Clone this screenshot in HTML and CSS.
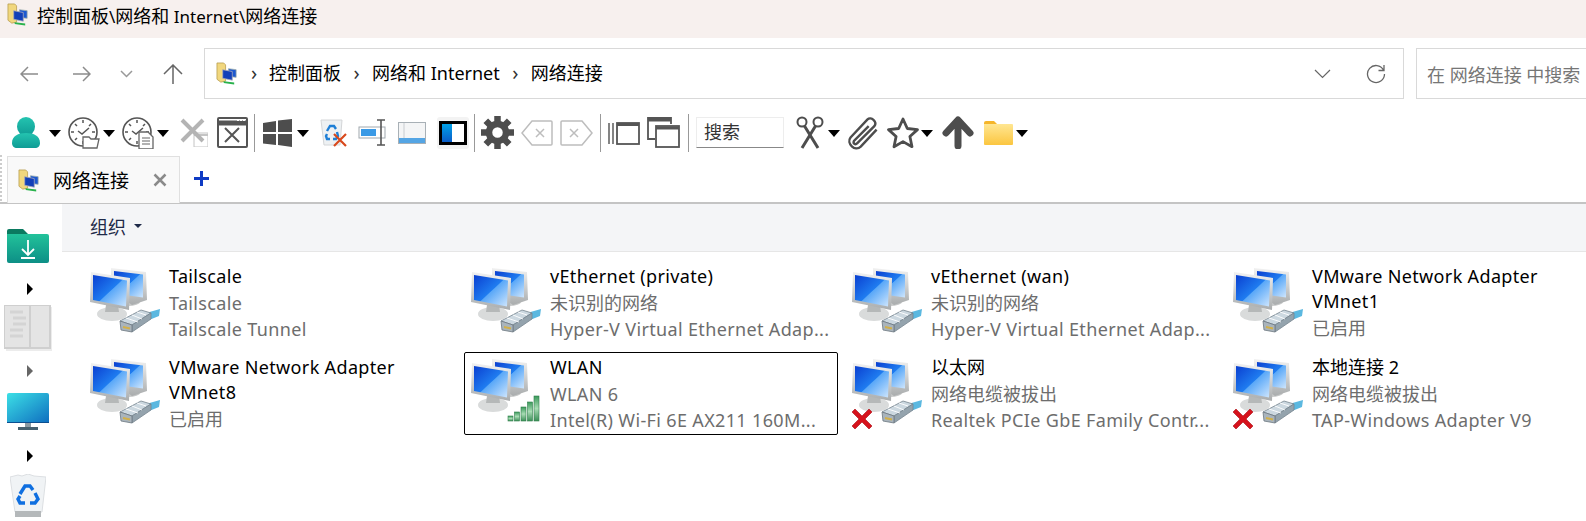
FILE: index.html
```html
<!DOCTYPE html>
<html lang="zh-CN">
<head>
  <meta charset="UTF-8" />
  <title>网络连接</title>
  <link rel="stylesheet" href="styles.css">
</head>
<body>
  <!-- shared icon parts -->
  <svg class="sprites" aria-hidden="true">
    <defs>
      <linearGradient id="gScreen" x1="0" y1="0" x2="1" y2="1">
        <stop offset="0" stop-color="#0a3fd0"/><stop offset=".5" stop-color="#1f7cf0"/><stop offset=".52" stop-color="#5aa8f8"/><stop offset="1" stop-color="#cfe6fd"/>
      </linearGradient>
      <linearGradient id="gFrame" x1="0" y1="0" x2="0" y2="1">
        <stop offset="0" stop-color="#f2f2f2"/><stop offset="1" stop-color="#a9acad"/>
      </linearGradient>
      <linearGradient id="gTeal" x1="0" y1="0" x2="0" y2="1">
        <stop offset="0" stop-color="#24c4b0"/><stop offset="1" stop-color="#0f9c95"/>
      </linearGradient>
      <linearGradient id="gBar" x1="0" y1="0" x2="0" y2="1">
        <stop offset="0" stop-color="#3c9a5c"/><stop offset=".5" stop-color="#a8dcb4"/><stop offset="1" stop-color="#3c8f58"/>
      </linearGradient>
      <linearGradient id="gFolder" x1="0" y1="0" x2="0" y2="1">
        <stop offset="0" stop-color="#ffe692"/><stop offset="1" stop-color="#fbc640"/>
      </linearGradient>
      <linearGradient id="gDown" x1="0" y1="0" x2="0" y2="1">
        <stop offset="0" stop-color="#22c29a"/><stop offset="1" stop-color="#0d8f86"/>
      </linearGradient>
      <linearGradient id="gMon" x1="0" y1="0" x2="1" y2="1">
        <stop offset="0" stop-color="#3ce0e6"/><stop offset="1" stop-color="#0f6fc0"/>
      </linearGradient>
      <linearGradient id="gPanel" x1="0" y1="0" x2="0" y2="1">
        <stop offset="0" stop-color="#00a2e8"/><stop offset="1" stop-color="#0a5cc8"/>
      </linearGradient>

      <g id="netPcs">
        <ellipse cx="38" cy="35" rx="12" ry="4" fill="#c6c8c8"/>
        <path d="M21 1l35 4 1 28-15 5-4-3-17-4z" fill="url(#gFrame)"/>
        <path d="M24 4l29 3.500v23l-29-4z" fill="url(#gScreen)"/>
        <ellipse cx="22" cy="47" rx="15" ry="7" fill="#d9dbdb"/>
        <path d="M16 38h12l1 7H15z" fill="#b5b8b8"/>
        <path d="M1 5l39 6-1 32-39-8z" fill="url(#gFrame)"/>
        <path d="M3 8l34 5.500-1 26-33-6.500z" fill="url(#gScreen)"/>
      </g>
      <g id="netCable">
        <path d="M56 46l14-4-1 7-10 4z" fill="#5bb8e0"/>
        <path d="M30 54l21-11 10 3-19 12z" fill="#ccd8e0" stroke="#77858f" stroke-width=".8"/>
        <path d="M42 58l19-12v6L42 65z" fill="#94a3ad" stroke="#77858f" stroke-width=".8"/>
        <path d="M30 54l12 4v7l-11-2z" fill="#a9b4bc" stroke="#6c7780" stroke-width=".8"/>
        <path d="M33 60l7 1.500" stroke="#d2b04a" stroke-width="2"/>
        <path d="M36 51l12 4M42 48l10 4M47 45l9 3" stroke="#fff" stroke-width=".9"/>
      </g>
      <g id="netBars">
        <rect x="37" y="58" width="5" height="5" fill="url(#gBar)" stroke="#2f7f4b" stroke-width=".6"/>
        <rect x="43.500" y="54" width="5" height="9" fill="url(#gBar)" stroke="#2f7f4b" stroke-width=".6"/>
        <rect x="50" y="49" width="5" height="14" fill="url(#gBar)" stroke="#2f7f4b" stroke-width=".6"/>
        <rect x="56.500" y="44" width="5" height="19" fill="url(#gBar)" stroke="#2f7f4b" stroke-width=".6"/>
        <rect x="63" y="38" width="5" height="25" fill="url(#gBar)" stroke="#2f7f4b" stroke-width=".6"/>
      </g>
      <g id="netOff">
        <path d="M3 51l7 7 7-7 3 3-7 7 7 7-3 3-7-7-7 7-3-3 7-7-7-7z" fill="#d6121c" stroke="#a80d14" stroke-width=".6"/>
      </g>
      <g id="cpIcon">
        <path d="M1 1h7l2 2v17l-5 1-4-3z" fill="#f1d77e" stroke="#b79c4d" stroke-width=".8"/>
        <path d="M13 7l8 1v8l-8-1z" fill="#1c58d0" stroke="#9aa" stroke-width=".8"/>
        <path d="M7 8l10 2v9L7 17z" fill="#123fb8" stroke="#aab" stroke-width=".8"/>
        <path d="M8 20l11 1.500v2L8 22z" fill="#29b24c"/>
      </g>
    </defs>
  </svg>

  <div class="titlebar">
    <svg class="cp-ico" viewBox="0 0 24 24"><use href="#cpIcon"/></svg>
    <span>控制面板<span class="tt-lat">\</span>网络和<span class="tt-lat"> Internet\</span>网络连接</span>
  </div>

  <div class="navbar">
    <div class="nav-btns">
      <svg class="nav-arrow back" viewBox="0 0 18 16"><path d="M8 1L1 8l7 7M1 8h17" /></svg>
      <svg class="nav-arrow fwd" viewBox="0 0 18 16"><path d="M10 1l7 7-7 7M17 8H0" /></svg>
      <svg class="nav-chev" viewBox="0 0 13 8"><path d="M1 1l5.500 5.500L12 1" /></svg>
      <svg class="nav-up" viewBox="0 0 20 20"><path d="M1 10l9-9 9 9M10 1v19" /></svg>
    </div>
    <div class="address">
      <svg class="cp-ico" viewBox="0 0 24 24"><use href="#cpIcon"/></svg>
      <span class="crumb-sep first">›</span>
      <span>控制面板</span>
      <span class="crumb-sep">›</span>
      <span>网络和 Internet</span>
      <span class="crumb-sep">›</span>
      <span>网络连接</span>
      <svg class="addr-chev" viewBox="0 0 17 10"><path d="M1 1l7.500 7.500L16 1" /></svg>
      <svg class="addr-refresh" viewBox="0 0 20 20"><path d="M17.500 6A8.500 8.500 0 1 0 18.500 10M18 1v5.500h-5.500" /></svg>
    </div>
    <div class="search">在 网络连接 中搜索</div>
  </div>

  <div class="toolbar">
    <svg class="ico" width="28" height="31" viewBox="0 0 28 31"><ellipse cx="14" cy="9.500" rx="9" ry="9.500" fill="url(#gTeal)"/><path d="M0 26c0-7 6-10 14-10s14 3 14 10c0 3-2 5-5 5H5c-3 0-5-2-5-5z" fill="url(#gTeal)"/></svg>
    <i class="caret ml9"></i>
    <svg class="ico ml7" width="32" height="32" viewBox="0 0 32 32"><circle cx="15" cy="15" r="14" fill="none" stroke="#555" stroke-width="1.600"/><path d="M15 3v3M15 24v3M3 15h3M24 15h3M7 7l2 2M23 7l-2 2M7 23l2-2M10 14l4 3 7-6" fill="none" stroke="#555" stroke-width="1.500"/><path d="M15 20h6l2 2h8l-2 9H15z" fill="#fff" stroke="#666" stroke-width="1.300"/></svg>
    <i class="caret ml3"></i>
    <svg class="ico ml7" width="32" height="32" viewBox="0 0 32 32"><circle cx="15" cy="15" r="14" fill="none" stroke="#555" stroke-width="1.600"/><path d="M15 3v3M15 24v3M3 15h3M24 15h3M7 7l2 2M23 7l-2 2M7 23l2-2M10 14l4 3 7-6" fill="none" stroke="#555" stroke-width="1.500"/><path d="M17 15h9l5 5v12H17z" fill="#fff" stroke="#666" stroke-width="1.300"/><path d="M20 21h8M20 24h8M20 27h8" stroke="#666" stroke-width="1.200"/></svg>
    <i class="caret ml3"></i>
    <svg class="ico ml11" width="28" height="29" viewBox="0 0 28 29"><path d="M14 15h14v14H14z" fill="#fff" stroke="#c4c4c4"/><path d="M14 17h14" stroke="#c4c4c4" stroke-width="2"/><path d="M2 2l21 21M23 2L2 23" stroke="#b4b4b4" stroke-width="4"/></svg>
    <svg class="ico ml9" width="31" height="31" viewBox="0 0 31 31"><rect x="1" y="1" width="29" height="29" rx="1" fill="#fff" stroke="#555" stroke-width="2"/><path d="M1 6h29" stroke="#555" stroke-width="5"/><path d="M20 3.500h2M23 3.500h2M26 3.500h2" stroke="#fff"/><path d="M8 11l14 14M22 11L8 25" stroke="#555" stroke-width="2"/></svg>
    <i class="sep ml6"></i>
    <svg class="ico ml8" width="29" height="28" viewBox="0 0 29 28"><path d="M0 4l13-2v11H0zM15 1.500L29 0v13H15zM0 15h13v11L0 24.500zM15 15h14v13l-14-2z" fill="#4d4d4d"/></svg>
    <i class="caret ml5"></i>
    <svg class="ico ml11" width="28" height="29" viewBox="0 0 28 29"><path d="M1 2h21l-2 25H4z" fill="#eef1f3" stroke="#d4d6d8"/><path d="M7 13l3-5h4l2 3M17 14l1 4-2 3h-3M10 21H7l-1-3 1-2" fill="none" stroke="#1f7fd6" stroke-width="2.400"/><path d="M14 16l12 12M26 16L14 28" stroke="#d8491d" stroke-width="2.200"/></svg>
    <svg class="ico ml10" width="28" height="27" viewBox="0 0 28 27"><rect x="1" y="8" width="26" height="11" fill="#fff" stroke="#9fa7ad"/><rect x="3" y="10" width="15" height="7" fill="#3a9ae6"/><path d="M19 1h8M19 26h8M23 1v25" stroke="#555" stroke-width="1.600"/></svg>
    <svg class="ico ml12" width="28" height="22" viewBox="0 0 28 22"><rect x=".5" y=".5" width="27" height="21" fill="#f4f5f6" stroke="#a8b0b6"/><rect x="1" y="16" width="26" height="5" fill="#54a5e4"/><path d="M6 1v15" stroke="#c8ccd0"/></svg>
    <span class="panel-btn ml11">
      <svg width="28" height="24" viewBox="0 0 28 24"><rect x="1.500" y="1.500" width="25" height="21" fill="#fff" stroke="#000" stroke-width="3"/><rect x="3" y="3" width="10" height="18" fill="url(#gPanel)"/></svg>
    </span>
    <i class="sep ml5"></i>
    <svg class="ico ml6" width="33" height="33" viewBox="0 0 33 33"><path d="M16.500 0v6M16.500 27v6M0 16.500h6M27 16.500h6M4.800 4.800l4.500 4.500M23.700 23.700l4.500 4.500M28.200 4.800l-4.500 4.500M9.300 23.700l-4.500 4.500" stroke="#4d4d4d" stroke-width="6.500"/><circle cx="16.500" cy="16.500" r="8.500" fill="#fff" stroke="#4d4d4d" stroke-width="6.500"/></svg>
    <svg class="ico ml7" width="32" height="26" viewBox="0 0 32 26"><path d="M11 1h19a1 1 0 0 1 1 1v22a1 1 0 0 1-1 1H11L1 13z" fill="#fff" stroke="#bdbdbd" stroke-width="1.500"/><path d="M15 9l8 8M23 9l-8 8" stroke="#bdbdbd" stroke-width="1.500"/></svg>
    <svg class="ico ml7" width="33" height="26" viewBox="0 0 33 26"><path d="M22 1H2a1 1 0 0 0-1 1v22a1 1 0 0 0 1 1h20l10-12z" fill="#fff" stroke="#bdbdbd" stroke-width="1.500"/><path d="M10 9l8 8M18 9l-8 8" stroke="#bdbdbd" stroke-width="1.500"/></svg>
    <i class="sep ml7"></i>
    <svg class="ico ml7" width="32" height="24" viewBox="0 0 32 24"><path d="M1 2v21M5 2v21" stroke="#666" stroke-width="1.600"/><rect x="9" y="2" width="22" height="21" fill="#fff" stroke="#555" stroke-width="1.800"/><path d="M9 3.500h22" stroke="#555" stroke-width="3"/></svg>
    <svg class="ico ml7" width="33" height="31" viewBox="0 0 33 31"><path d="M8 22H1V1h23v6" fill="none" stroke="#555" stroke-width="1.800"/><path d="M1 3h23" stroke="#555" stroke-width="3"/><rect x="9" y="9" width="23" height="21" fill="#fff" stroke="#555" stroke-width="1.800"/><path d="M9 11h23" stroke="#555" stroke-width="3"/></svg>
    <i class="sep ml8"></i>
    <div class="tb-search ml7">搜索</div>
    <svg class="ico ml12" width="28" height="33" viewBox="0 0 28 33"><circle cx="6" cy="6" r="4.500" fill="none" stroke="#4d4d4d" stroke-width="2"/><circle cx="22" cy="6" r="4.500" fill="none" stroke="#4d4d4d" stroke-width="2"/><path d="M8.500 10L22 32M19.500 10L6 32" stroke="#4d4d4d" stroke-width="3"/></svg>
    <i class="caret ml4"></i>
    <svg class="ico ml7" width="32" height="34" viewBox="5 1 26 30"><path d="M30 13L16 28c-5 5-13-3-9-8L22 4c3-3 9 2 6 6L13 25c-2 2-4 0-3-2L23 10" fill="none" stroke="#4d4d4d" stroke-width="2.100"/></svg>
    <svg class="ico ml8" width="32" height="32" viewBox="0 0 32 32"><path d="M16 2l4.300 9.500 10.200 1.100-7.600 6.900 2.100 10.200L16 24.600 7 29.700l2.100-10.200-7.600-6.900 10.200-1.100z" fill="#fff" stroke="#4d4d4d" stroke-width="2.800" stroke-linejoin="round"/></svg>
    <i class="caret ml2"></i>
    <svg class="ico ml9" width="32" height="33" viewBox="0 0 32 33"><path d="M4 17L16 4l12 13M16 5v25" fill="none" stroke="#4d4d4d" stroke-width="7" stroke-linecap="round" stroke-linejoin="round"/></svg>
    <svg class="ico ml10" width="29" height="24" viewBox="0 0 29 24"><path d="M0 2a2 2 0 0 1 2-2h8l3 3H0z" fill="#f5b52a"/><path d="M0 3h28a1 1 0 0 1 1 1v19a1 1 0 0 1-1 1H1a1 1 0 0 1-1-1z" fill="url(#gFolder)"/></svg>
    <i class="caret ml3"></i>
  </div>

  <div class="tabstrip">
    <div class="grip"></div>
    <div class="tab">
      <svg class="cp-ico" viewBox="0 0 24 24"><use href="#cpIcon"/></svg>
      <span class="tab-label">网络连接</span>
      <svg class="tab-close" viewBox="0 0 14 14"><path d="M1.500 1.500l11 11M12.500 1.500l-11 11" /></svg>
    </div>
    <svg class="tab-plus" viewBox="0 0 15 15"><path d="M7.500 0v15M0 7.500h15" /></svg>
  </div>

  <div class="main">
    <div class="side">
      <svg class="side-folder" width="42" height="34" viewBox="0 0 42 34"><path d="M0 2a2 2 0 0 1 2-2h14l5 5H0z" fill="#0b7a60"/><path d="M0 5h40a2 2 0 0 1 2 2v25a2 2 0 0 1-2 2H2a2 2 0 0 1-2-2z" fill="url(#gDown)"/><path d="M21 11v14M15 20l6 6 6-6M14 29h14" fill="none" stroke="#fff" stroke-width="1.800"/></svg>
      <i class="tri"></i>
      <svg class="side-book" width="48" height="46" viewBox="0 0 48 46"><rect x="2" y="2" width="46" height="44" fill="#ececec"/><rect x="0" y="0" width="46" height="43" fill="#e4e4e4" stroke="#cfcfcf" stroke-width="2"/><path d="M26 0v43" stroke="#cfcfcf" stroke-width="2"/><path d="M6 7h13M9 13h13M9 19h13M6 25h13M6 31h13" stroke="#d4d4d4" stroke-width="3"/></svg>
      <i class="tri dim"></i>
      <svg class="side-mon" width="42" height="37" viewBox="0 0 42 37"><path d="M0 2a2 2 0 0 1 2-2h38a2 2 0 0 1 2 2v27H0z" fill="url(#gMon)"/><path d="M0 29h42v1H0z" fill="#0c4f90"/><path d="M18 30h6v4h-6z" fill="#8a9aa3"/><path d="M11 34h20v3H11z" fill="#46606e"/></svg>
      <i class="tri"></i>
      <svg class="side-bin" width="36" height="43" viewBox="0 0 36 43"><path d="M0 3l8-2 4 1 6-2 6 2 12 1-4 35H5z" fill="#f0f3f5" stroke="#dcdfe2"/><path d="M5 37h26v6H5z" fill="#b4b8ba"/><path d="M10 20l5-8h5l3 4M25 19l3 6-3 4h-5M15 29h-5l-2-4 2-3" fill="none" stroke="#0f6fe0" stroke-width="3.400"/></svg>
    </div>

    <div class="content">
      <div class="cmdbar">
        <span>组织</span>
        <i class="cmd-caret"></i>
      </div>
      <div class="grid">
        <div class="item">
          <svg class="net-ico" viewBox="0 0 70 71"><use href="#netPcs"/><use href="#netCable"/></svg>
          <div class="item-text">
            <div class="name">Tailscale</div>
            <div class="sub">Tailscale</div>
            <div class="sub">Tailscale Tunnel</div>
          </div>
        </div>
        <div class="item">
          <svg class="net-ico" viewBox="0 0 70 71"><use href="#netPcs"/><use href="#netCable"/></svg>
          <div class="item-text">
            <div class="name">vEthernet (private)</div>
            <div class="sub cn">未识别的网络</div>
            <div class="sub">Hyper-V Virtual Ethernet Adap...</div>
          </div>
        </div>
        <div class="item">
          <svg class="net-ico" viewBox="0 0 70 71"><use href="#netPcs"/><use href="#netCable"/></svg>
          <div class="item-text">
            <div class="name">vEthernet (wan)</div>
            <div class="sub cn">未识别的网络</div>
            <div class="sub">Hyper-V Virtual Ethernet Adap...</div>
          </div>
        </div>
        <div class="item">
          <svg class="net-ico" viewBox="0 0 70 71"><use href="#netPcs"/><use href="#netCable"/></svg>
          <div class="item-text">
            <div class="name">VMware Network Adapter VMnet1</div>
            <div class="sub cn">已启用</div>
          </div>
        </div>
        <div class="item">
          <svg class="net-ico" viewBox="0 0 70 71"><use href="#netPcs"/><use href="#netCable"/></svg>
          <div class="item-text">
            <div class="name">VMware Network Adapter VMnet8</div>
            <div class="sub cn">已启用</div>
          </div>
        </div>
        <div class="item selected">
          <svg class="net-ico" viewBox="0 0 70 71"><use href="#netPcs"/><use href="#netBars"/></svg>
          <div class="item-text">
            <div class="name">WLAN</div>
            <div class="sub">WLAN 6</div>
            <div class="sub">Intel(R) Wi-Fi 6E AX211 160M...</div>
          </div>
        </div>
        <div class="item">
          <svg class="net-ico" viewBox="0 0 70 71"><use href="#netPcs"/><use href="#netCable"/><use href="#netOff"/></svg>
          <div class="item-text">
            <div class="name cn">以太网</div>
            <div class="sub cn">网络电缆被拔出</div>
            <div class="sub">Realtek PCIe GbE Family Contr...</div>
          </div>
        </div>
        <div class="item">
          <svg class="net-ico" viewBox="0 0 70 71"><use href="#netPcs"/><use href="#netCable"/><use href="#netOff"/></svg>
          <div class="item-text">
            <div class="name cn">本地连接 2</div>
            <div class="sub cn">网络电缆被拔出</div>
            <div class="sub">TAP-Windows Adapter V9</div>
          </div>
        </div>
      </div>
    </div>
  </div>
</body>
</html>
```

FILE: styles.css
```css
* {
  box-sizing: border-box;
}

html, body {
  margin: 0;
  height: 521px;
  overflow: hidden;
}

body {
  background: #fff;
  color: #000;
  font-family: "Noto Sans", "Noto Sans CJK SC", sans-serif;
  font-size: 18px;
}

.sprites {
  position: absolute;
  width: 0;
  height: 0;
}

svg {
  flex: none;
  display: block;
}

.cp-ico {
  width: 23px;
  height: 23px;
}

/* Title bar */
.titlebar {
  height: 38px;
  background: #f7f0ee;
  display: flex;
  align-items: center;
  gap: 7px;
  padding: 0 0 9px 7px;
}

.tt-lat {
  font-size: 17px;
}

/* Back / forward + address */
.navbar {
  height: 72px;
  display: flex;
  padding-top: 10px;
}

.nav-btns {
  width: 204px;
  height: 51px;
  display: flex;
  align-items: center;
  padding-left: 20px;
  fill: none;
}

.nav-arrow {
  width: 18px;
  height: 16px;
  stroke: #8c8c8c;
  stroke-width: 1.500;
}

.nav-arrow.fwd {
  margin-left: 35px;
}

.nav-chev {
  width: 13px;
  height: 8px;
  margin-left: 29px;
  stroke: #999;
  stroke-width: 1.500;
}

.nav-up {
  width: 20px;
  height: 20px;
  margin-left: 30px;
  stroke: #666;
  stroke-width: 1.500;
}

.address {
  width: 1200px;
  height: 51px;
  border: 1px solid #d9d9d9;
  display: flex;
  align-items: center;
  padding-left: 11px;
}

.address span {
  margin-top: -3px;
}

.crumb-sep {
  width: 31px;
  text-align: center;
  color: #333;
  font-size: 20px;
}

.crumb-sep.first {
  width: 30px;
}

.addr-chev {
  width: 17px;
  height: 10px;
  margin-left: auto;
  fill: none;
  stroke: #666;
  stroke-width: 1.200;
}

.addr-refresh {
  width: 20px;
  height: 20px;
  margin-left: 35px;
  margin-right: 17px;
  fill: none;
  stroke: #666;
  stroke-width: 1.300;
}

.search {
  margin-left: 12px;
  flex: 1;
  height: 51px;
  border: 1px solid #d9d9d9;
  border-right: none;
  display: flex;
  align-items: center;
  padding-left: 10px;
  color: #767676;
  white-space: nowrap;
  overflow: hidden;
}

/* Tool row */
.toolbar {
  height: 45px;
  display: flex;
  align-items: center;
  padding-left: 12px;
}

.caret {
  flex: none;
  width: 12px;
  height: 7px;
  border-left: 6px solid transparent;
  border-right: 6px solid transparent;
  border-top: 7px solid #000;
  margin-top: 2px;
}

.sep {
  flex: none;
  width: 1px;
  height: 38px;
  background: #999;
}

.panel-btn {
  flex: none;
  width: 32px;
  height: 32px;
  background: #f3f3f3;
  border-radius: 3px;
  display: flex;
  align-items: center;
  justify-content: center;
}

.tb-search {
  flex: none;
  width: 88px;
  height: 31px;
  border: 1px solid #ededed;
  border-bottom: 1px solid #888;
  padding-left: 7px;
  line-height: 28px;
  color: #333;
}

.ml2 { margin-left: 2px; }
.ml3 { margin-left: 3px; }
.ml4 { margin-left: 4px; }
.ml5 { margin-left: 5px; }
.ml6 { margin-left: 6px; }
.ml7 { margin-left: 7px; }
.ml8 { margin-left: 8px; }
.ml9 { margin-left: 9px; }
.ml10 { margin-left: 10px; }
.ml11 { margin-left: 11px; }
.ml12 { margin-left: 12px; }

/* Tabs */
.tabstrip {
  height: 49px;
  display: flex;
  align-items: flex-start;
  padding-left: 7px;
  border-bottom: 2px solid #c4c4c4;
  position: relative;
}

.grip {
  position: absolute;
  left: 0;
  top: 0;
  width: 2px;
  height: 46px;
  border-left: 2px dotted #ccc;
}

.tab {
  width: 173px;
  height: 47px;
  margin-top: 1px;
  background: #f9f9f9;
  border: 1px solid #e0e0e0;
  border-bottom: none;
  display: flex;
  align-items: center;
  padding-left: 10px;
  font-size: 19px;
}

.tab-label {
  margin-left: 12px;
}

.tab-close {
  width: 14px;
  height: 14px;
  margin-left: auto;
  margin-right: 12px;
  fill: none;
  stroke: #8a8a8a;
  stroke-width: 2.500;
}

.tab-plus {
  width: 15px;
  height: 15px;
  margin-left: 14px;
  margin-top: 16px;
  fill: none;
  stroke: #0f3bc4;
  stroke-width: 3;
}

/* Main area */
.main {
  display: flex;
  height: 317px;
}

.side {
  width: 62px;
  flex: none;
  display: flex;
  flex-direction: column;
  padding-top: 25px;
}

.side-folder { margin-left: 7px; }
.side-book { margin-left: 4px; margin-top: 10px; }
.side-mon { margin-left: 7px; margin-top: 16px; }
.side-bin { margin-left: 10px; margin-top: 12px; }

.tri {
  display: block;
  width: 6px;
  height: 12px;
  margin-left: 27px;
  margin-top: 20px;
  border-top: 6px solid transparent;
  border-bottom: 6px solid transparent;
  border-left: 6px solid #000;
}

.tri.dim {
  margin-top: 14px;
  border-left-color: #666;
}

.content {
  flex: 1;
  min-width: 0;
}

.cmdbar {
  height: 48px;
  background: #f4f5f7;
  border-bottom: 1px solid #e6e6e6;
  display: flex;
  align-items: center;
  padding: 0 0 3px 28px;
  color: #1e2a48;
}

.cmd-caret {
  width: 8px;
  height: 4px;
  margin-left: 8px;
  border-left: 4px solid transparent;
  border-right: 4px solid transparent;
  border-top: 4px solid #1e2a48;
}

.grid {
  display: grid;
  grid-template-columns: repeat(4, 374px);
  grid-auto-rows: 83px;
  column-gap: 7px;
  row-gap: 8px;
  margin: 9px 0 0 21px;
}

.item {
  display: flex;
  padding: 2px 9px 0 6px;
  border: 1px solid transparent;
  border-radius: 2px;
  letter-spacing: .35px;
}

.item.selected {
  border-color: #000;
}

.net-ico {
  width: 70px;
  height: 71px;
  margin-top: 3px;
}

.item-text {
  margin-left: 9px;
  min-width: 0;
  flex: 1;
}

.name {
  line-height: 25px;
  margin-bottom: 1px;
}

.sub {
  line-height: 26px;
  color: #6d6d6d;
  white-space: nowrap;
}

.cn {
  letter-spacing: 0;
}
```
